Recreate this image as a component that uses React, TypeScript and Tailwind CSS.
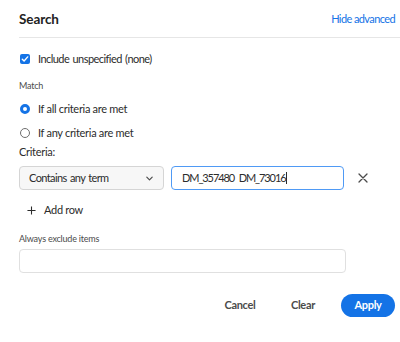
import React from 'react';

export default function App() {
  return (
    <div className="w-[400px] h-[342px] bg-white text-[#2c2c2c] font-['Lato',sans-serif] tracking-[-0.3px]">
      {/* Header */}
      <div className="pl-[19px]">
        <div className="flex items-center justify-between h-[37px] pr-[5px] pt-px">
          <h1 className="text-[13.5px] font-bold text-[#222] tracking-[-0.1px]">Search</h1>
          <button className="text-[11px] text-[#1473e6] tracking-[-0.6px]">Hide advanced</button>
        </div>
        <div className="h-px bg-[#e6e6e6]" />
      </div>

      <div className="pl-[19px] pr-[5px]">
        {/* Include unspecified */}
        <label className="flex items-center gap-[8px] h-[20px] mt-[11px]">
          <span className="ml-px w-[10px] h-[10px] rounded-[2px] bg-[#1473e6] flex items-center justify-center">
            <svg width="8" height="8" viewBox="0 0 8 8" fill="none">
              <path d="M1.3 4.2 3.1 6 6.7 1.9" stroke="white" strokeWidth="1.4" strokeLinecap="round" strokeLinejoin="round" />
            </svg>
          </span>
          <span className="text-[11px] leading-[14px] tracking-[-0.55px] [word-spacing:1px]">Include unspecified (none)</span>
        </label>

        {/* Match */}
        <div className="text-[9px] text-[#4b4b4b] mt-[10px] leading-[14px] tracking-[-0.2px]">Match</div>
        <div className="flex flex-col gap-[10px] mt-[9px]">
          <label className="flex items-center gap-[8px] h-[14px]">
            <span className="ml-px w-[10px] h-[10px] rounded-full border-[3px] border-[#1473e6] bg-white" />
            <span className="text-[11px] leading-[14px]">If all criteria are met</span>
          </label>
          <label className="flex items-center gap-[8px] h-[14px]">
            <span className="ml-px w-[10px] h-[10px] rounded-full border border-[#6e6e6e] bg-white" />
            <span className="text-[11px] leading-[14px]">If any criteria are met</span>
          </label>
        </div>

        {/* Criteria */}
        <div className="text-[11px] mt-[4px] leading-[16px]">Criteria:</div>
        <div className="flex items-center mt-[6px]">
          <div className="w-[145px] h-[24px] rounded-[4px] border border-[#d5d5d5] bg-[#f7f7f7] flex items-center justify-between pl-[9px] pr-[9px]">
            <span className="text-[11px] tracking-[-0.6px] [word-spacing:1px]">Contains any term</span>
            <svg width="9" height="9" viewBox="0 0 10 10" fill="none">
              <path d="M2 3.5 5 6.5 8 3.5" stroke="#4b4b4b" strokeWidth="1.3" strokeLinecap="round" strokeLinejoin="round" />
            </svg>
          </div>
          <div className="ml-[7px] w-[173px] h-[24px] rounded-[4px] border border-[#4f9af5] bg-white flex items-center pl-[10px]">
            <span className="text-[11px] tracking-[-1.1px] [word-spacing:3px]">DM_357480 DM_73016</span>
            <span className="ml-px w-px h-[12px] bg-[#2c2c2c]" />
          </div>
          <button className="ml-[14px] w-[10px] h-[10px] flex items-center justify-center">
            <svg width="10" height="10" viewBox="0 0 10 10" fill="none">
              <path d="M1 1 9 9M9 1 1 9" stroke="#4b4b4b" strokeWidth="1.3" strokeLinecap="round" />
            </svg>
          </button>
        </div>

        {/* Add row */}
        <button className="flex items-center gap-[8px] ml-[8px] mt-[12px] h-[16px]">
          <svg width="9" height="9" viewBox="0 0 10 10" fill="none">
            <path d="M5 0.5V9.5M0.5 5H9.5" stroke="#2c2c2c" strokeWidth="1.2" />
          </svg>
          <span className="text-[11px]">Add row</span>
        </button>

        {/* Always exclude */}
        <div className="text-[9px] text-[#4b4b4b] mt-[14px] leading-[14px] tracking-[-0.2px]">Always exclude items</div>
        <div className="mt-[3px] w-[327px] h-[24px] rounded-[4px] border border-[#e0e0e0] bg-white" />

        {/* Footer */}
        <div className="flex items-center justify-end mt-[21px]">
          <button className="text-[11px] font-bold text-[#4b4b4b] w-[48px] text-center">Cancel</button>
          <button className="ml-[15px] text-[11px] font-bold text-[#4b4b4b] w-[48px] text-center">Clear</button>
          <button className="ml-[14px] w-[54px] h-[23px] rounded-full bg-[#1473e6] text-white text-[11px] font-bold">Apply</button>
        </div>
      </div>
    </div>
  );
}
